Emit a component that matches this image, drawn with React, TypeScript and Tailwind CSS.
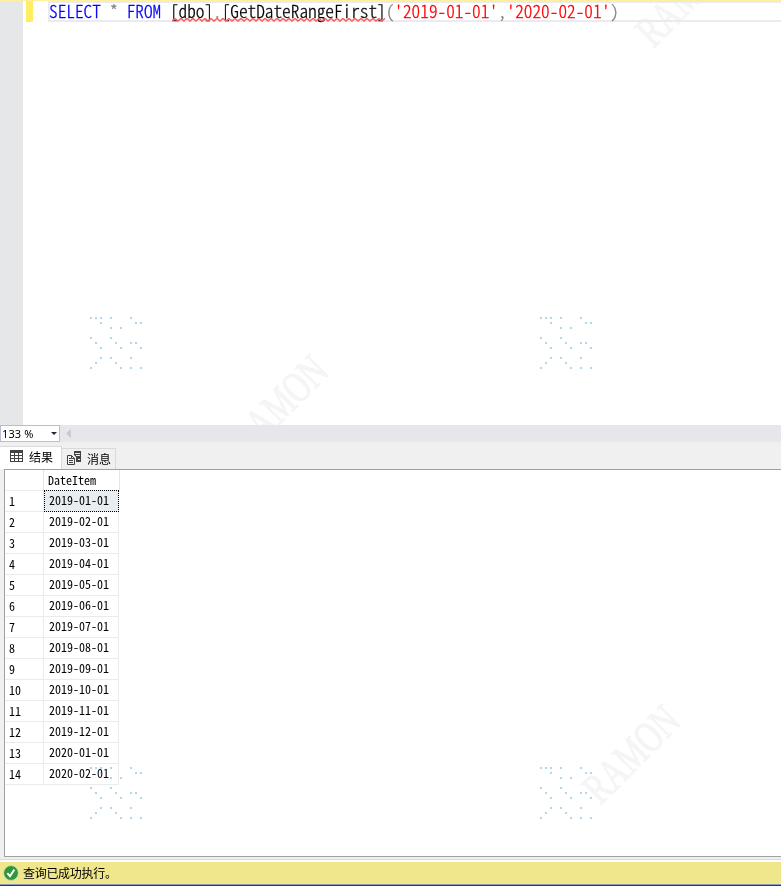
import React from 'react';

const dates = [
  '2019-01-01', '2019-02-01', '2019-03-01', '2019-04-01', '2019-05-01', '2019-06-01', '2019-07-01',
  '2019-08-01', '2019-09-01', '2019-10-01', '2019-11-01', '2019-12-01', '2020-01-01', '2020-02-01',
];

const dots = [
  [0, 0], [1, 0], [2, 0], [4, 0], [8, 0], [2, 1], [9, 1], [10, 1], [4, 2], [6, 2], [0, 4], [4, 4],
  [1, 5], [5, 5], [8, 5], [9, 5], [2, 6], [6, 6], [10, 6], [2, 8], [4, 8], [8, 8], [1, 9], [5, 9],
  [0, 10], [6, 10], [8, 10], [10, 10],
];

const mono = "font-['Noto_Sans_CJK_SC',sans-serif] [font-feature-settings:'hwid'] whitespace-pre";

function Watermarks() {
  return (
    <svg className="pointer-events-none absolute inset-0 mix-blend-darken" width="781" height="886">
      {[[684, -3], [279, 404], [631, 754]].map(([x, y]) => (
        <g key={x} transform={`translate(${x} ${y}) rotate(-45) scale(.71 1)`}>
          <text x="0" y="15" textAnchor="middle" fontSize="44" fill="#f5f5f5" stroke="#f5f5f5" strokeWidth="1.2" className="font-['Liberation_Serif',serif]">RAMON</text>
        </g>
      ))}
      {[[90, 317], [540, 317], [90, 767], [540, 767]].map(([x, y]) =>
        dots.map(([a, b]) => (
          <rect key={`${x}-${y}-${a}-${b}`} x={x + a * 5} y={y + b * 5} width="2" height="2" fill="#b0d8ea" />
        )),
      )}
    </svg>
  );
}

function Editor() {
  return (
    <div className="flex h-[424px] bg-white">
      <div className="w-[23px] bg-[#e6e7e8]" />
      <div className="ml-[3px] h-[21px] w-[7px] bg-[#ffee62]" />
      <div className="relative ml-[15px] h-[21px] flex-1 border-y-2 border-l-2 border-[#eaeaf2]">
        <div className={`-ml-px -mt-[1px] h-[18px] text-[17.28px] font-light leading-[18px] [-webkit-text-stroke:.3px] ${mono}`}>
          <span className="text-[#0000ff]">SELECT</span>
          <span className="text-[#808080]"> * </span>
          <span className="text-[#0000ff]">FROM </span>
          <span className="text-black">[dbo]</span>
          <span className="text-[#808080]">.</span>
          <span className="text-black">[GetDateRangeFirst]</span>
          <span className="text-[#808080]">(</span>
          <span className="text-[#ff0000]">'2019-01-01'</span>
          <span className="text-[#808080]">,</span>
          <span className="text-[#ff0000]">'2020-02-01'</span>
          <span className="text-[#808080]">)</span>
        </div>
        <svg className="absolute left-[122px] top-[15px]" width="213" height="4">
          <defs>
            <pattern id="wave" width="6" height="4" patternUnits="userSpaceOnUse">
              <path d="M-3 .5L0 3L3 .5L6 3L9 .5" stroke="#f86060" strokeWidth="1.5" fill="none" />
            </pattern>
          </defs>
          <rect width="213" height="4" fill="url(#wave)" />
        </svg>
      </div>
    </div>
  );
}

function ZoomBar() {
  return (
    <div className="flex h-[17px] bg-[#e6e6eb]">
      <div className="flex h-[17px] w-[60px] items-center border border-[#b8bdd0] bg-white pl-[1px] font-['Noto_Sans',sans-serif] text-[11px] leading-none tracking-[.1px] text-black">
        133 %
        <svg className="ml-auto mr-[2px]" width="6" height="3"><path d="M0 0h6L3 3z" fill="#1b293e" /></svg>
      </div>
      <svg className="ml-[5px] mt-[4px]" width="6" height="9"><path d="M6 0v9L1 4.5z" fill="#c8c9d2" /></svg>
    </div>
  );
}

function Tabs() {
  return (
    <div className="flex h-[27px] items-end bg-[#f0f0f0] font-['Noto_Sans_CJK_SC',sans-serif] text-[12px] leading-none text-black">
      <div className="flex h-[23px] w-[62px] border-r border-t border-[#d9d9d9] bg-white">
        <svg className="ml-[10px] mt-[3px]" width="13" height="12">
          <path d="M0 0h13v12H0z" fill="#424242" />
          <path d="M1 3h3v2H1zM5 3h3v2H5zM9 3h3v2H9zM1 6h3v2H1zM5 6h3v2H5zM9 6h3v2H9zM1 9h3v2H1zM5 9h3v2H5zM9 9h3v2H9z" fill="#fff" />
        </svg>
        <span className="ml-[6px] mt-[4px]">结果</span>
      </div>
      <div className="flex h-[21px] w-[54px] border-r border-t border-[#d9d9d9]">
        <svg className="ml-[5px] mt-[2px]" width="15" height="15">
          <path d="M.5 4.5h4l3 3v6h-7z" fill="#f0f0f0" stroke="#424242" />
          <path d="M2 7.5h2M2 9.5h4M2 11.5h4M4.5 4.5v3h3" fill="none" stroke="#424242" />
          <path d="M7 0h7v11H9V6L7 4z" fill="#424242" />
          <path d="M8 2.5h5M9 4.5h4M11 8.5h2" stroke="#f0f0f0" />
        </svg>
        <span className="ml-[5px] mt-[4px]">消息</span>
      </div>
    </div>
  );
}

function Results() {
  return (
    <div className="h-[391px] bg-[#f0f0f0] pl-[4px]">
      <div className={`h-[388px] border-y border-l border-[#a0a0a8] bg-white text-[12px] leading-[20px] text-black ${mono}`}>
        <div className="flex h-[21px] w-[115px] border-b border-[#ebebeb]">
          <div className="w-[39px] border-r border-[#e5e5e5]" />
          <div className="flex-1 border-r border-[#e5e5e5] pl-[4px]">DateItem</div>
        </div>
        {dates.map((date, i) => (
          <div key={date} className="flex h-[21px] w-[114px]">
            <div className="w-[39px] border-b border-r border-[#ebebeb] pl-[4px] leading-[19px]">{i + 1}</div>
            {i === 0 ? (
              <div className="-mt-px h-[22px] flex-1 border border-dotted border-black bg-[#e8edf2] pl-[4px] leading-[17px]">{date}</div>
            ) : (
              <div className="flex-1 border-b border-r border-[#ebebeb] pl-[5px] leading-[17px]">{date}</div>
            )}
          </div>
        ))}
      </div>
      <div className="-ml-[4px] mt-[2px] h-px bg-[#d9d9de]" />
    </div>
  );
}

export default function App() {
  return (
    <div className="relative h-[886px] w-[781px] overflow-hidden bg-white">
      <div className="h-px bg-[#fff0a0]" />
      <Editor />
      <ZoomBar />
      <Tabs />
      <Results />
      <div className="mt-[2px] flex h-[22px] items-center bg-[#f0e68c] pl-[3px] font-['Noto_Sans_CJK_SC',sans-serif] text-[12px] leading-none tracking-[-.3px] text-black">
        <svg width="16" height="16">
          <circle cx="8" cy="8" r="7.4" fill="#2f963c" stroke="#d8e4c0" strokeWidth=".8" />
          <path d="M4.3 8.2l2.7 3 4.3-6.6" fill="none" stroke="#fff" strokeWidth="2" />
        </svg>
        <span className="-mt-px ml-[4px]">查询已成功执行。</span>
      </div>
      <div className="h-px bg-[#8d9bc0]" />
      <div className="h-px bg-[#293955]" />
      <Watermarks />
    </div>
  );
}
